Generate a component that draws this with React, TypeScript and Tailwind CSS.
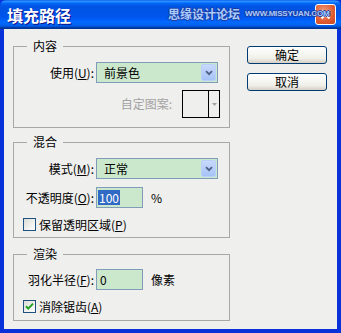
import React from "react";

const font = { fontFamily: '"Noto Sans CJK SC", "Noto Sans", sans-serif' };

function Combo({ value }: { value: string }) {
  return (
    <div className="flex h-[21px] w-[122px] border border-[#7f9db9] bg-[#cce8cc]">
      <div className="flex flex-1 items-center pl-[7px] text-[12px] leading-none text-black">{value}</div>
      <div className="m-[1px] flex w-[15px] items-center justify-center rounded-[2px] border border-[#b9d1fa] bg-[linear-gradient(#c6d9fc,#a6c2f6)]">
        <svg width="8" height="6" viewBox="0 0 8 6">
          <path d="M1 1.2 L4 4.2 L7 1.2" fill="none" stroke="#4d6185" strokeWidth="1.8" />
        </svg>
      </div>
    </div>
  );
}

function Check({ checked, children }: { checked?: boolean; children: React.ReactNode }) {
  return (
    <div className="flex items-center gap-[3px] pl-[9px]">
      <div className="flex h-[13px] w-[13px] items-center justify-center border border-[#1c5180] bg-[linear-gradient(135deg,#dcdcd7,#ffffff)]">
        {checked && (
          <svg width="9" height="9" viewBox="0 0 9 9">
            <path d="M1 4.2 L3.3 6.6 L8 1.6" fill="none" stroke="#21a121" strokeWidth="2" />
          </svg>
        )}
      </div>
      <span className="text-[12px] leading-none text-black">{children}</span>
    </div>
  );
}

function Group({ title, children, className }: { title: string; children: React.ReactNode; className?: string }) {
  return (
    <fieldset className={"w-[217px] border border-[#a8a8a8] " + (className ?? "")}>
      <legend className="ml-[13px] px-[6px] text-[12px] leading-[16px] text-black">{title}</legend>
      {children}
    </fieldset>
  );
}

function Btn({ children }: { children: React.ReactNode }) {
  return (
    <div className="flex h-[18px] w-[80px] items-center justify-center rounded-[3px] border border-[#003c74] bg-[linear-gradient(#ffffff,#f0f0ea_70%,#d6d0c5)] text-[12px] leading-none text-black">
      {children}
    </div>
  );
}

export default function App() {
  return (
    <div className="flex h-[333px] w-[341px] flex-col overflow-hidden bg-[#0831d9]" style={font}>
      {/* Title bar */}
      <div className="relative flex h-[29px] shrink-0 items-center rounded-t-[6px] bg-[linear-gradient(#0058ee_0%,#3593ff_4%,#288eff_6%,#127dff_8%,#036ffc_10%,#0262ee_14%,#0057e5_20%,#0054e3_24%,#0055eb_56%,#005bf5_66%,#026afe_76%,#0062ef_86%,#0052d6_92%,#0040ab_94%,#003092_100%)] pl-[7px]">
        <span className="text-[16px] font-bold leading-none text-white [text-shadow:1px_1px_#0f1089]">填充路径</span>
        <div className="ml-auto mr-[5px] flex h-[21px] w-[21px] items-center justify-center rounded-[3px] border border-white bg-[radial-gradient(circle_at_40%_35%,#f0a080,#e05a30_60%,#c24620)]">
          <svg width="11" height="11" viewBox="0 0 11 11">
            <path d="M1.5 1.5 L9.5 9.5 M9.5 1.5 L1.5 9.5" stroke="white" strokeWidth="2.2" />
          </svg>
        </div>
        <div className="absolute left-[168px] top-[8px] flex items-center gap-[5px] whitespace-nowrap">
          <span className="text-[12px] font-bold leading-none text-[#a9cbff] [text-shadow:1px_0_#1d3ea0,-1px_0_#1d3ea0,0_1px_#1d3ea0,0_-1px_#1d3ea0]">思缘设计论坛</span>
          <span className="text-[8px] font-bold leading-none tracking-[-0.2px] text-[#a9cbff] [text-shadow:1px_0_#1d3ea0,-1px_0_#1d3ea0,0_1px_#1d3ea0,0_-1px_#1d3ea0]" style={{ fontFamily: '"Liberation Sans", sans-serif' }}>WWW.MISSYUAN.COM</span>
        </div>
      </div>
      {/* Body */}
      <div className="mx-[4px] mb-[4px] flex flex-1 bg-[#efefee] pl-[9px] pt-[9px]">
        <div className="flex flex-col">
          <Group title="内容">
            <div className="flex items-center pt-[8px]">
              <span className="w-[82px] pr-[2px] text-right text-[12px] leading-none">
                使用(<span className="underline">U</span>):
              </span>
              <Combo value="前景色" />
            </div>
            <div className="flex items-center justify-end gap-[10px] pb-[9px] pr-[9px] pt-[7px]">
              <span className="text-[12px] leading-none text-[#a3a3a3]">自定图案:</span>
              <div className="flex h-[28px] w-[38px] border border-black bg-[#efefee]">
                <div className="flex-1 border-r border-black" />
                <div className="flex w-[10px] items-center justify-center">
                  <svg width="5" height="3" viewBox="0 0 5 3">
                    <path d="M0 0 L5 0 L2.5 3 Z" fill="#a0a0a0" />
                  </svg>
                </div>
              </div>
            </div>
          </Group>
          <Group title="混合" className="mt-[6px]">
            <div className="flex items-center pt-[8px]">
              <span className="w-[82px] pr-[2px] text-right text-[12px] leading-none">
                模式(<span className="underline">M</span>):
              </span>
              <Combo value="正常" />
            </div>
            <div className="mt-[8px] flex items-center">
              <span className="w-[82px] pr-[2px] text-right text-[12px] leading-none">
                不透明度(<span className="underline">O</span>):
              </span>
              <div className="flex h-[21px] w-[47px] items-center border border-[#7f9db9] bg-[#cce8cc] pl-[1px]">
                <span className="bg-[#316ac5] px-[1px] text-[12px] leading-[15px] text-white">100</span>
              </div>
              <span className="ml-[8px] text-[12px] leading-none">%</span>
            </div>
            <div className="mb-[6px] mt-[10px]">
              <Check>
                保留透明区域(<span className="underline">P</span>)
              </Check>
            </div>
          </Group>
          <Group title="渲染" className="mt-[8px]">
            <div className="flex items-center pt-[7px]">
              <span className="w-[82px] pr-[2px] text-right text-[12px] leading-none">
                羽化半径(<span className="underline">F</span>):
              </span>
              <div className="flex h-[21px] w-[47px] items-center border border-[#7f9db9] bg-[#cce8cc] pl-[3px]">
                <span className="text-[12px] leading-none">0</span>
              </div>
              <span className="ml-[8px] text-[12px] leading-none">像素</span>
            </div>
            <div className="mb-[7px] mt-[10px]">
              <Check checked>
                消除锯齿(<span className="underline">A</span>)
              </Check>
            </div>
          </Group>
        </div>
        <div className="ml-[17px] flex flex-col gap-[9px] pt-[8px]">
          <Btn>确定</Btn>
          <Btn>取消</Btn>
        </div>
      </div>
    </div>
  );
}
